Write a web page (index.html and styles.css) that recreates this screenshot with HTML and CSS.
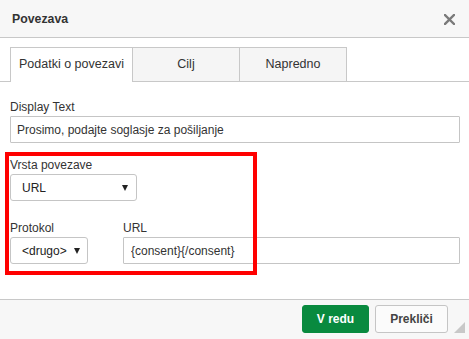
FILE: index.html
```html
<!DOCTYPE html>
<html lang="sl">
<head>
<meta charset="utf-8">
<title>Povezava</title>
<link rel="stylesheet" href="styles.css">
</head>
<body>
<div class="dialog">
  <div class="header">
    <span class="title">Povezava</span>
    <svg class="close" width="11" height="11" viewBox="0 0 11 11"><path d="M1 1 L10 10 M10 1 L1 10" stroke="#7a7a7a" stroke-width="2.4" stroke-linecap="square"/></svg>
  </div>
  <div class="tabs">
    <div class="tab active">Podatki o povezavi</div>
    <div class="tab">Cilj</div>
    <div class="tab">Napredno</div>
  </div>
  <div class="panel">
    <div class="group">
      <label class="label">Display Text</label>
      <input class="field" type="text" value="Prosimo, podajte soglasje za pošiljanje">
    </div>
    <div class="group group-type">
      <label class="label">Vrsta povezave</label>
      <div class="select select-type"><span>URL</span><i class="arrow"></i></div>
    </div>
    <div class="row">
      <div class="group col-proto">
        <label class="label">Protokol</label>
        <div class="select select-proto"><span>&lt;drugo&gt;</span><i class="arrow"></i></div>
      </div>
      <div class="group col-url">
        <label class="label">URL</label>
        <input class="field field-url" type="text" value="{consent}{/consent}">
      </div>
    </div>
    <div class="highlight"></div>
  </div>
  <div class="footer">
    <button class="btn btn-primary">V redu</button>
    <button class="btn">Prekliči</button>
    <div class="grip"></div>
  </div>
</div>
</body>
</html>
```

FILE: styles.css
```css
* { box-sizing: border-box; }
html, body { margin: 0; padding: 0; }
body {
  font-family: "Liberation Sans", Arial, sans-serif;
  font-size: 12px;
  color: #333;
  background: #fff;
}
.dialog {
  width: 469px;
  height: 339px;
  display: flex;
  flex-direction: column;
  position: relative;
  overflow: hidden;
}
.header {
  height: 38px;
  background: #f7f7f7;
  border-bottom: 1px solid #c8c8c8;
  display: flex;
  align-items: center;
  justify-content: space-between;
  padding: 0 14px 0 12px;
  flex: none;
}
.title {
  font-weight: bold;
  font-size: 12.3px;
  color: #333;
}
.close { display: block; margin-top: 1px; }
.tabs {
  margin-top: 9px;
  padding-left: 10px;
  display: flex;
  align-items: flex-start;
  border-bottom: 1px solid #c8c8c8;
  height: 35px;
  flex: none;
}
.tab {
  height: 34px;
  line-height: 33px;
  border: 1px solid #c8c8c8;
  border-bottom: none;
  border-left: none;
  background: #f5f5f5;
  font-size: 12.5px;
  color: #333;
  text-align: center;
  width: 107px;
}
.tab.active {
  border-left: 1px solid #c8c8c8;
  width: 123px;
  height: 35px;
  background: #fff;
}
.panel {
  flex: 1;
  padding: 17px 9px 0 10px;
  position: relative;
}
.group { display: flex; flex-direction: column; }
.label {
  display: block;
  line-height: 16px;
  height: 16px;
  margin-bottom: 1px;
  color: #333;
}
.field {
  display: block;
  width: 100%;
  height: 27px;
  border: 1px solid #c5c5c5;
  border-radius: 1px;
  padding: 0 6px;
  font-family: "Liberation Sans", Arial, sans-serif;
  font-size: 12px;
  color: #333;
  background: #fff;
  outline: none;
}
.group-type { margin-top: 14px; }
.select {
  height: 27px;
  border: 1px solid #c5c5c5;
  border-radius: 3px;
  background: #fff;
  display: flex;
  align-items: center;
  justify-content: space-between;
  padding: 0 8px 0 11px;
  color: #222;
}
.select-type { width: 127px; }
.select-proto { width: 78px; padding-right: 7px; }
.arrow {
  width: 0;
  height: 0;
  border-left: 3px solid transparent;
  border-right: 3px solid transparent;
  border-top: 6px solid #222;
  margin-top: 1px;
}
.row {
  display: flex;
  margin-top: 19px;
  gap: 35px;
}
.col-url { flex: 1; }
.field-url { padding-left: 7px; }
.highlight {
  position: absolute;
  left: 5px;
  top: 70px;
  width: 252px;
  height: 123px;
  border: 4px solid #ff0000;
  pointer-events: none;
}
.footer {
  flex: none;
  height: 40px;
  border-top: 1px solid #c8c8c8;
  background: #f7f7f7;
  display: flex;
  justify-content: flex-end;
  align-items: flex-start;
  gap: 6px;
  padding: 5px 21px 0 0;
  position: relative;
}
.btn {
  height: 28px;
  padding: 0 12px;
  font-family: "Liberation Sans", Arial, sans-serif;
  font-size: 12px;
  font-weight: bold;
  color: #444;
  background: #fbfbfb;
  border: 1px solid #c5c5c5;
  border-radius: 3px;
  width: 73px;
}
.btn-primary {
  width: 67px;
  background: #098a3f;
  border-color: #098a3f;
  color: #fff;
}
.grip {
  position: absolute;
  right: 4px;
  bottom: 6px;
  width: 0;
  height: 0;
  border-left: 11px solid transparent;
  border-bottom: 11px solid #c8c8c8;
}
```
